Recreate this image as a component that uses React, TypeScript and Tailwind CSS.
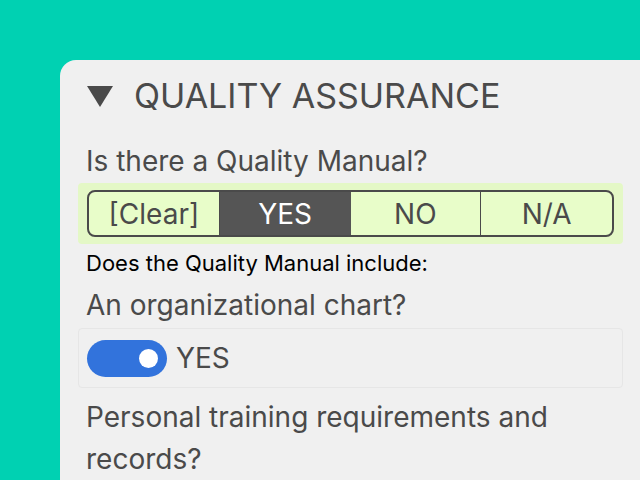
export default function App() {
  return (
    <div className="h-[480px] w-[640px] overflow-hidden bg-[#00d1b2] pt-[60px] pl-[60px] font-['Inter',sans-serif] text-[#4a4a4a]">
      <div className="h-[440px] rounded-tl-[16px] bg-[#f0f0f0] pt-[16px] pr-[17px] pl-[18px]">
        {/* Section heading */}
        <div className="flex h-[40px] items-center gap-[21px] pl-[9px]">
          <svg width="26" height="21" viewBox="0 0 26 21" className="shrink-0">
            <polygon points="0,0 26,0 13,21" fill="#4a4a4a" />
          </svg>
          <span className="text-[34px] leading-[40px]">QUALITY ASSURANCE</span>
        </div>

        <p className="mt-[28px] pl-[8px] text-[28px] leading-[34px]">Is there a Quality Manual?</p>

        {/* Segmented answer */}
        <div className="mt-[5px] rounded-[4px] bg-[#e4f8c6] px-[9px] py-[7px]">
          <div className="grid h-[47px] grid-cols-4 overflow-hidden rounded-[8px] border-2 border-[#4a4a4a] bg-[#e8fdc9] text-[28px]">
            <div className="flex items-center justify-center border-r border-[#4a4a4a]">[Clear]</div>
            <div className="flex items-center justify-center bg-[#555555] text-white">YES</div>
            <div className="flex items-center justify-center border-r border-[#4a4a4a]">NO</div>
            <div className="flex items-center justify-center">N/A</div>
          </div>
        </div>

        <p className="mt-[6px] pl-[8px] text-[22px] leading-[26px] text-black">Does the Quality Manual include:</p>

        <p className="mt-[12px] pl-[8px] text-[28px] leading-[34px]">An organizational chart?</p>

        <div className="mt-[6px] flex h-[60px] items-center gap-[9px] rounded-[4px] border border-[#e6e6e6] px-[8px]">
          <div className="flex h-[37px] w-[80px] items-center justify-end rounded-full bg-[#3273dc] pr-[9px]">
            <div className="h-[19px] w-[19px] rounded-full bg-white" />
          </div>
          <span className="text-[28px] leading-none">YES</span>
        </div>

        <p className="mt-[8px] pl-[8px] text-[28px] leading-[42px]">Personal training requirements and records?</p>
      </div>
    </div>
  );
}
